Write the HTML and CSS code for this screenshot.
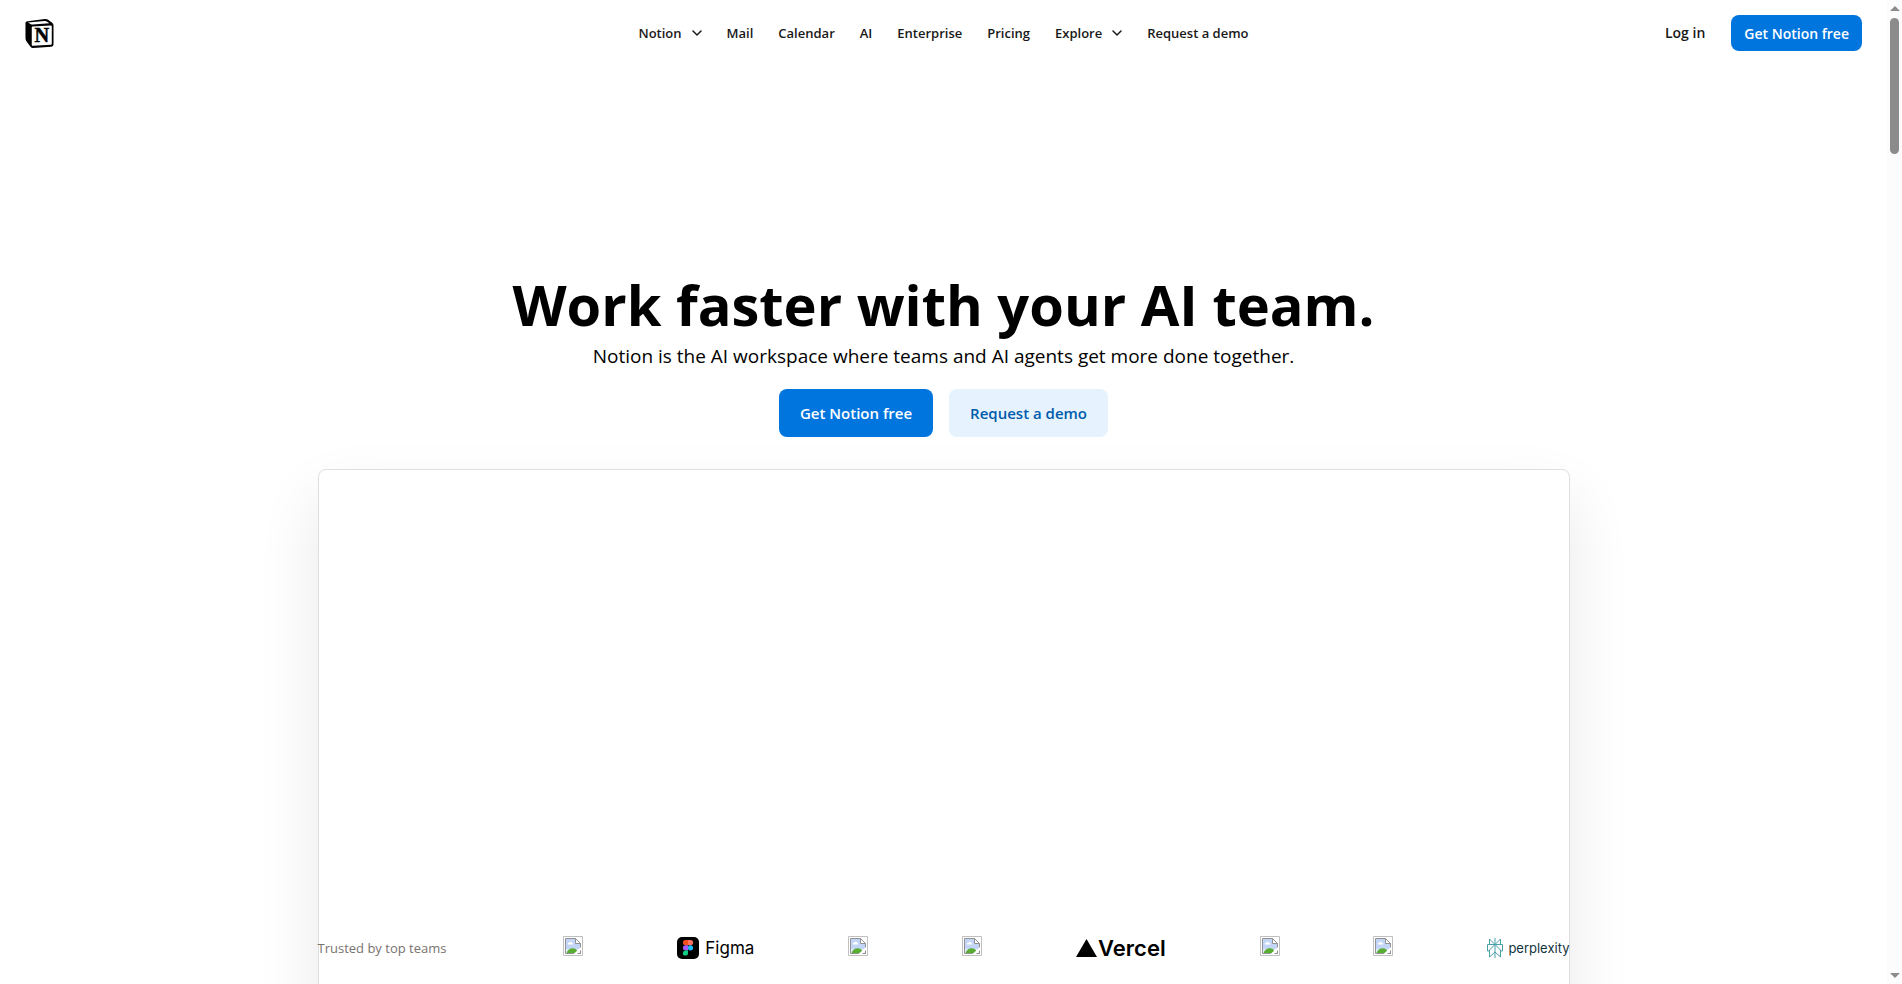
FILE: index.html
```html
<!DOCTYPE html>
<html lang="en">
<head>
<meta charset="utf-8">
<meta name="viewport" content="width=device-width, initial-scale=1">
<title>Notion</title>
<link rel="stylesheet" href="styles.css">
</head>
<body>
<svg class="defs" aria-hidden="true">
  <symbol id="chevron" viewBox="0 0 10 6"><path d="M1 1l4 4 4-4" fill="none" stroke="currentColor" stroke-width="1.5" stroke-linecap="round" stroke-linejoin="round"/></symbol>
  <symbol id="missing" viewBox="0 0 20 20">
    <path d="M.5 .5h19v19H.5z" fill="#fff" stroke="#c0c0c0"/>
    <path d="M3 3h9l5 5v9H3z" fill="#c3d5f6"/>
    <path d="M3 13h14v4H3z" fill="#e3ebf9"/>
    <path d="M5 8.500c-.6-1.400.6-2.300 1.600-1.800.6-1.300 2.300-1 2.500.2 1.300-.1 1.600 1.200.9 1.600z" fill="#fff"/>
    <path d="M3.500 17c1-3 3.500-4.800 6-4.800 2.200 0 3.500.8 4.500 2V17z" fill="#58ad32"/>
    <path d="M2.500 17.500v-15h10l5 5v10z" fill="none" stroke="#929292"/>
    <path d="M12.500 2.500v5h5z" fill="#fff" stroke="#929292"/>
    <path d="M10 18.500l8.500-8v3.500L14 18.500z" fill="#fff"/>
    <path d="M14.500 17.500h3v-3" fill="none" stroke="#929292"/>
  </symbol>
</svg>
<div class="window">
  <div class="page">
    <header class="header">
      <a class="brand" href="#" aria-label="Notion home">
        <svg width="29" height="31" viewBox="0 0 30 32">
          <path d="M1 3.600 20.500 1q2-.2 3.400.8l4.200 3q1.400 1 1.400 2.700v20q0 2-2.200 2.200L8.500 30.900q-1.800.1-2.800-1.200L1.800 24.600Q.5 23 .5 21V5q0-1.200 1.500-1.500z" fill="#000"/>
          <path d="M3 4.700 20.500 3.100q1.200-.1 2 .4l2.700 1.800L8 6.700q-1.200.1-2.200-.6z" fill="#fff"/>
          <path d="M8 8.700 26.700 7.600q1 0 1 1v18q0 1-1 1.100L8 28.800q-1 0-1-1V9.800q0-1 1-1.100z" fill="#fff"/>
          <text class="brand-letter" x="17.500" y="25" text-anchor="middle">N</text>
        </svg>
      </a>
      <nav class="nav">
        <button class="nav-item" type="button">Notion<svg class="chevron"><use href="#chevron"/></svg></button>
        <a class="nav-item" href="#">Mail</a>
        <a class="nav-item" href="#">Calendar</a>
        <a class="nav-item" href="#">AI</a>
        <a class="nav-item" href="#">Enterprise</a>
        <a class="nav-item" href="#">Pricing</a>
        <button class="nav-item" type="button">Explore<svg class="chevron"><use href="#chevron"/></svg></button>
        <a class="nav-item" href="#">Request a demo</a>
      </nav>
      <div class="account">
        <a class="nav-item login" href="#">Log in</a>
        <a class="button button-small button-primary" href="#">Get Notion free</a>
      </div>
    </header>
    <main class="main">
      <section class="hero">
        <h1 class="title">Work faster with your AI team.</h1>
        <p class="subtitle">Notion is the AI workspace where teams and AI agents get more done together.</p>
        <div class="actions">
          <a class="button button-primary" href="#">Get Notion free</a>
          <a class="button button-soft" href="#">Request a demo</a>
        </div>
      </section>
      <section class="showcase">
        <div class="teams">
          <span class="teams-label">Trusted by top teams</span>
          <svg class="missing"><use href="#missing"/></svg>
          <span class="logo logo-figma">
            <svg width="22" height="22" viewBox="0 0 22 22">
              <rect width="22" height="22" rx="5" fill="#000"/>
              <path d="M11 3H8.500a2.500 2.500 0 0 0 0 5.200H11z" fill="#f24e1e"/>
              <path d="M11 3h2.500a2.500 2.500 0 0 1 0 5.200H11z" fill="#ff7262"/>
              <path d="M11 8.200H8.500a2.500 2.500 0 0 0 0 5.200H11z" fill="#a259ff"/>
              <circle cx="13.500" cy="10.800" r="2.600" fill="#1abcfe"/>
              <path d="M8.500 13.400H11V16a2.600 2.600 0 1 1-2.500-2.600z" fill="#0acf83"/>
            </svg>Figma</span>
          <svg class="missing"><use href="#missing"/></svg>
          <svg class="missing"><use href="#missing"/></svg>
          <span class="logo logo-vercel">
            <svg width="21" height="18" viewBox="0 0 21 18"><path d="M10.500 0 21 18H0z"/></svg>Vercel</span>
          <svg class="missing"><use href="#missing"/></svg>
          <svg class="missing"><use href="#missing"/></svg>
          <span class="logo logo-perplexity">
            <svg width="16" height="20" viewBox="0 0 16 20" fill="none" stroke="#4aa0a8"><path d="M8 0v20M8 6.500 2.500 1v5.500M8 6.500 13.500 1v5.500M2.500 13H.5V6.500h15V13h-2M8 6.500 2.500 12v7L8 14l5.500 5v-7z"/></svg>perplexity</span>
        </div>
      </section>
    </main>
  </div>
  <div class="scrollbar" aria-hidden="true">
    <svg width="10" height="5" viewBox="0 0 10 5"><path d="M5 0l5 5H0z"/></svg>
    <div class="scrollbar-thumb"></div>
    <svg class="scrollbar-down" width="10" height="5" viewBox="0 0 10 5"><path d="M0 0h10L5 5z"/></svg>
  </div>
</div>
</body>
</html>
```
FILE: styles.css
```css
* { box-sizing: border-box; }

body {
  margin: 0;
  background: #fff;
  color: #191918;
  font-family: "Segoe UI", "Open Sans", "Noto Sans", sans-serif;
}

a { color: inherit; text-decoration: none; }

.defs { display: none; }

.window {
  display: grid;
  grid-template-columns: minmax(0, 1fr) 15px;
  height: 100vh;
  overflow: hidden;
}

.page {
  display: flex;
  flex-direction: column;
  min-width: 0;
  overflow: hidden;
}

.header {
  display: grid;
  grid-template-columns: 1fr auto 1fr;
  align-items: center;
  height: 66px;
  padding: 0 25px;
}

.brand { display: flex; }

.brand-letter {
  font: bold 21px "Liberation Serif", serif;
  stroke: #000;
  stroke-width: 0.5;
}

.nav {
  display: flex;
  align-items: center;
  gap: 25px;
}

.nav-item {
  display: flex;
  align-items: center;
  gap: 10px;
  padding: 0;
  border: 0;
  background: none;
  color: inherit;
  font-family: inherit;
  font-size: 13px;
  font-weight: 600;
  line-height: 20px;
  white-space: nowrap;
}

.chevron { width: 10px; height: 6px; }

.account {
  display: flex;
  align-items: center;
  justify-content: flex-end;
  gap: 26px;
}

.login { font-size: 14px; }

.button {
  display: flex;
  align-items: center;
  height: 48px;
  padding: 0 21px;
  border-radius: 8px;
  font-size: 15px;
  font-weight: 600;
  white-space: nowrap;
}

.button-small {
  height: 36px;
  padding: 0 13px;
  font-size: 14px;
}

.button-primary { background: #0075de; color: #fff; }

.button-soft { background: #e6f3fe; color: #005bab; }

.main {
  display: flex;
  flex: 1;
  flex-direction: column;
  align-items: center;
  padding-top: 206px;
}

.hero {
  display: flex;
  flex-direction: column;
  align-items: center;
  color: #000;
  text-align: center;
}

.title {
  margin: 0;
  font-size: 56px;
  font-weight: 700;
  line-height: 64px;
}

.subtitle {
  margin: 6px 0 19px;
  font-size: 19px;
  line-height: 28px;
}

.actions { display: flex; gap: 16px; }

.showcase {
  display: flex;
  flex: 1;
  align-items: flex-end;
  width: calc(100% - 48px);
  max-width: 1252px;
  margin: 32px 0 -80px;
  padding-bottom: 103px;
  border: 1px solid #dfdfde;
  border-radius: 8px;
  box-shadow: 0 28px 64px rgba(0, 0, 0, 0.09);
}

.teams {
  display: flex;
  flex: 1;
  align-items: center;
  justify-content: space-between;
  margin: 0 -1px;
}

.teams-label {
  flex: 0 0 152px;
  color: #78736f;
  font-size: 13px;
  line-height: 24px;
}

.missing { width: 20px; height: 20px; margin-bottom: 4px; }

.logo {
  display: flex;
  align-items: center;
  color: #000;
  font-family: Inter, sans-serif;
  line-height: 24px;
}

.logo-figma { gap: 6px; font-size: 17px; }

.logo-vercel { gap: 1px; font-size: 22px; font-weight: 600; }

.logo-perplexity { gap: 5px; color: #13343b; font-size: 13px; }

.scrollbar {
  display: flex;
  flex-direction: column;
  align-items: center;
  gap: 7px;
  padding: 6px 0;
  background: #fcfcfc;
  fill: #8b8b8b;
}

.scrollbar-thumb {
  width: 9px;
  height: 14%;
  border-radius: 5px;
  background: #8b8b8b;
}

.scrollbar-down { margin-top: auto; }
```
